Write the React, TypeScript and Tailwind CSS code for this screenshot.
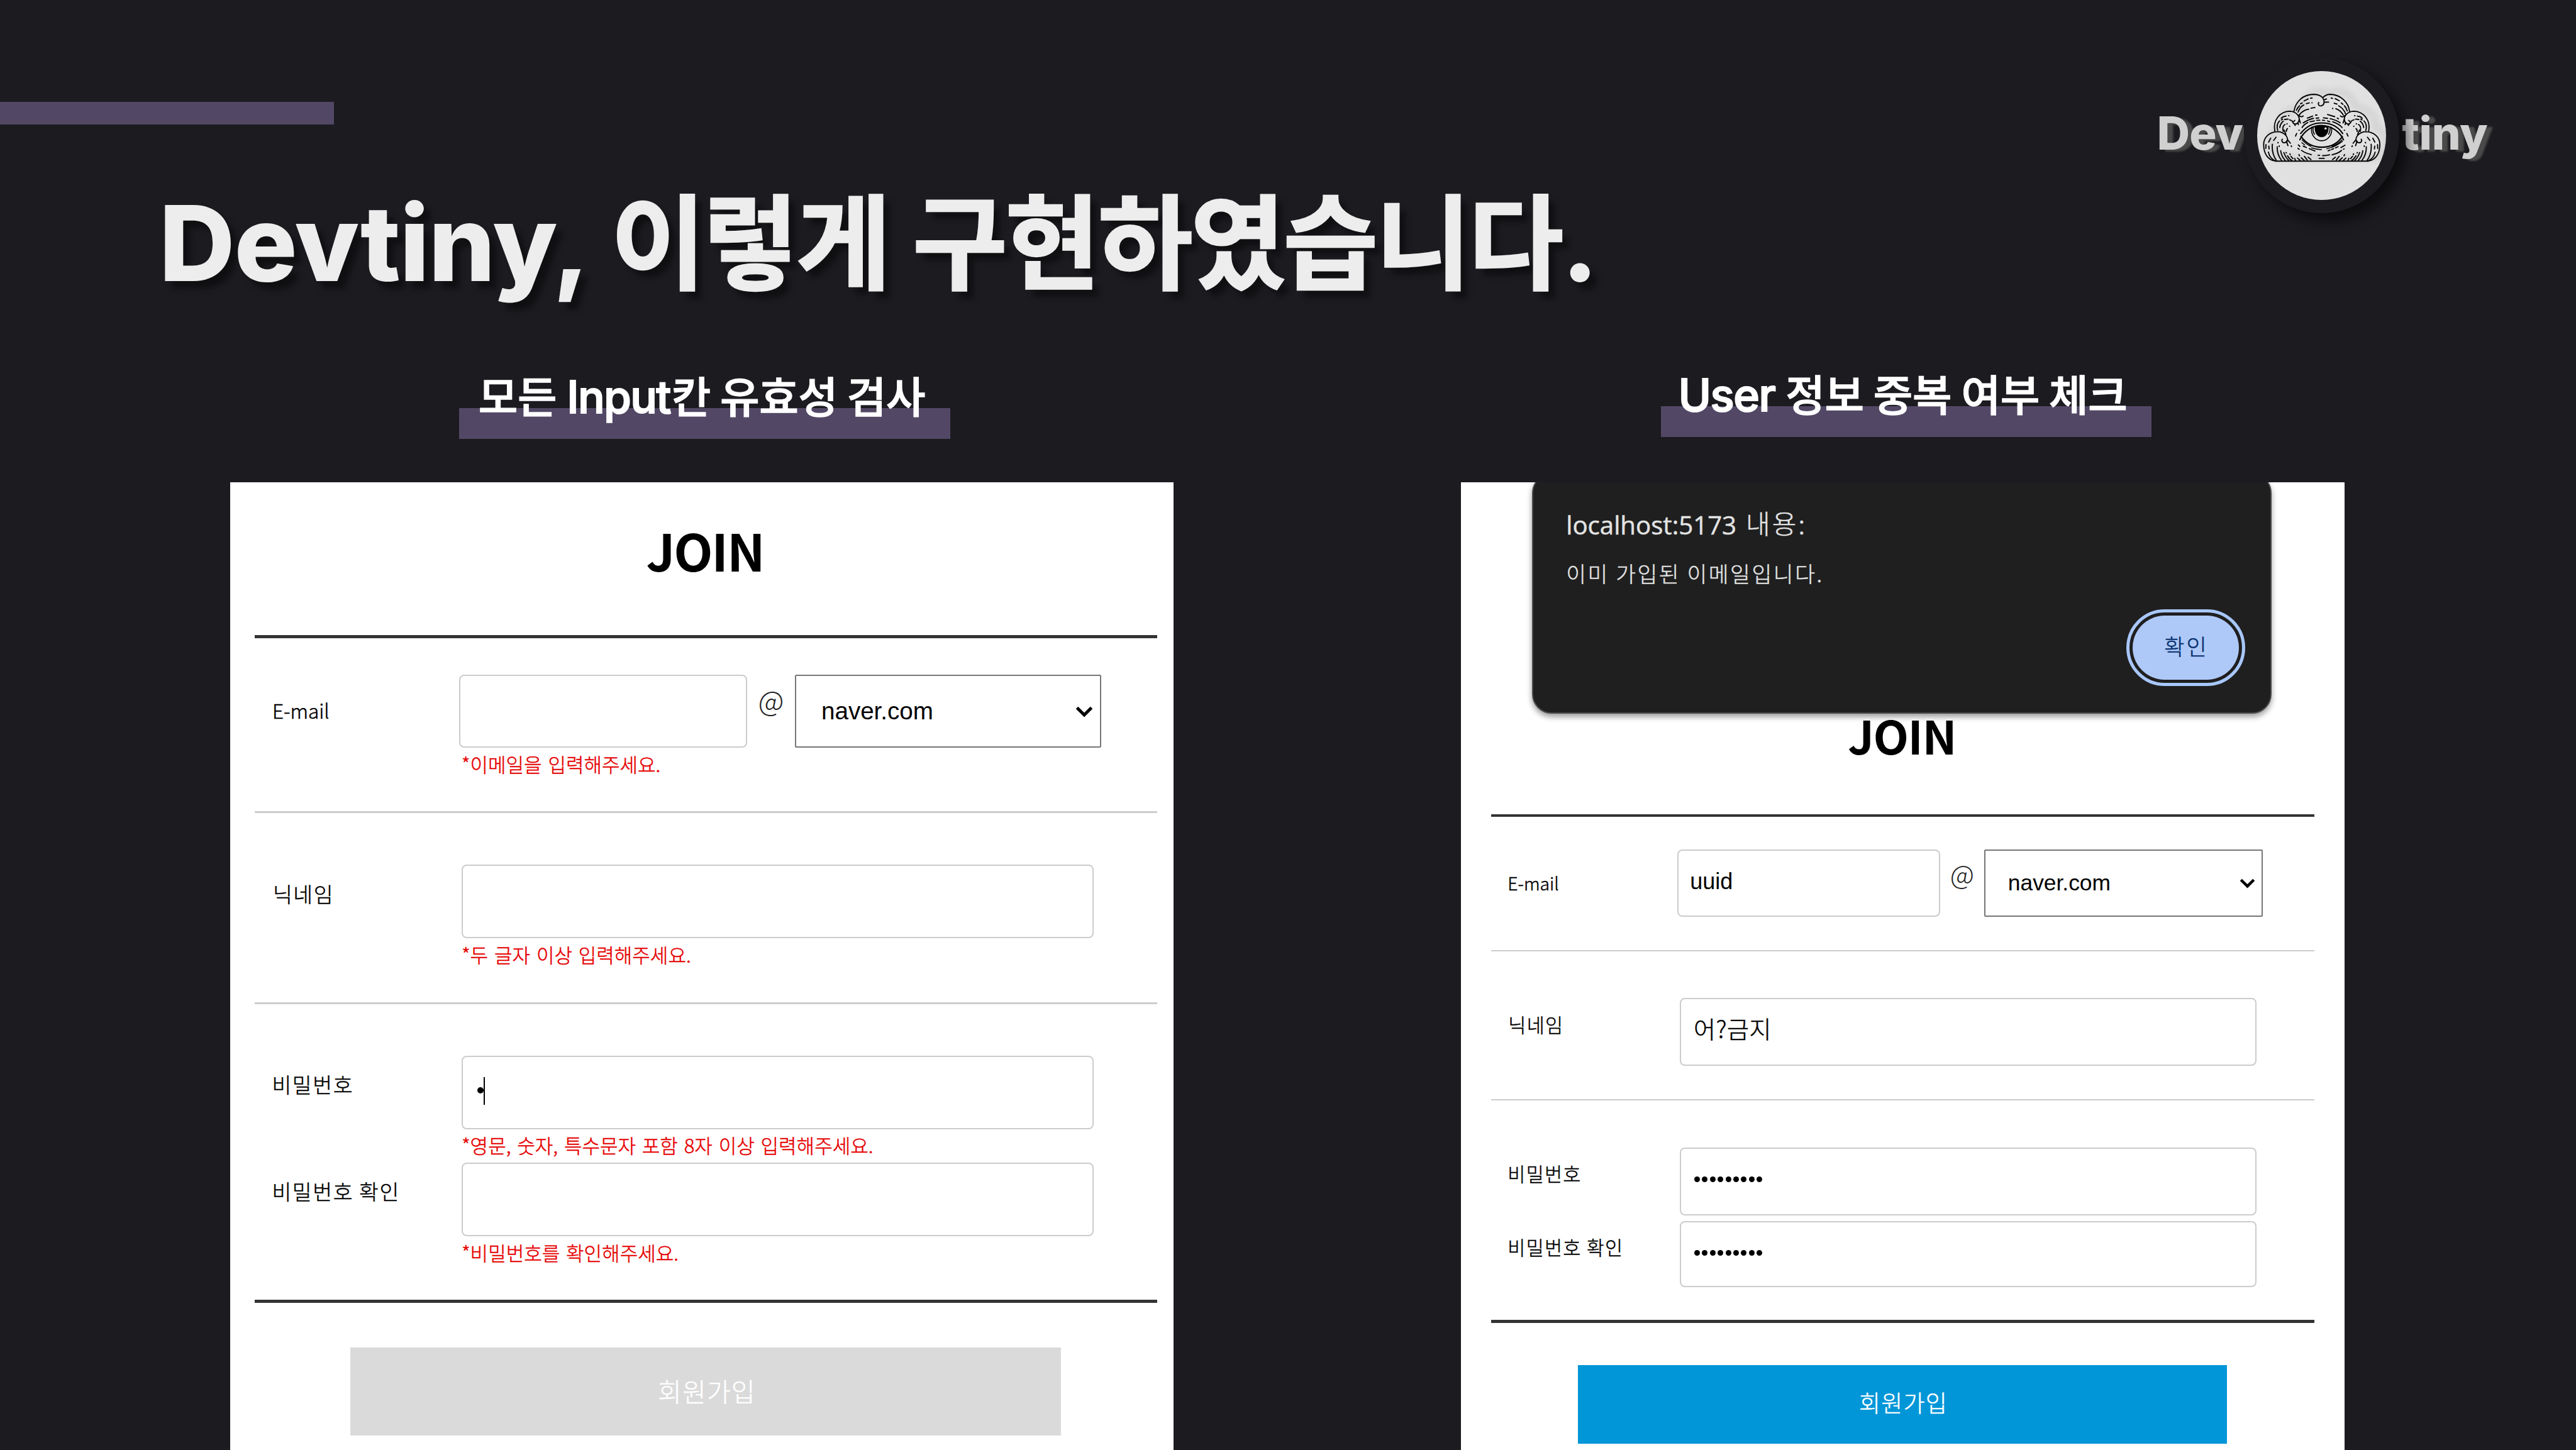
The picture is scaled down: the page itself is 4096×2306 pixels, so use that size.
import type { ReactNode } from "react";

const KR = "font-['Noto_Sans_CJK_KR',sans-serif]";
const INTER = "font-['Inter','Noto_Sans_CJK_KR',sans-serif]";
const ARIAL = "font-['Liberation_Sans',Arial,sans-serif]";
const OPEN = "font-['Open_Sans',sans-serif]";

function cx(...parts: (string | undefined)[]) {
  return parts.filter(Boolean).join(" ");
}

/* One half of the shading that is the same on both sides of the cloud. */
function CloudSide() {
  return (
    <g>
      <path d="M205 496C190 420 240 356 312 356C350 358 376 385 376 412C374 438 354 450 341 444C328 437 330 430 326 424M340 444L348 456M366 436L370 450M376 412L384 438M338 428L345 420" />
      <path d="M212 705C155 700 127 650 127 590C127 540 165 499 230 499C268 503 294 530 294 555C292 578 268 580 259 572C251 562 254 556 258 552M294 555L314 580M286 566L297 597M283 520L270 488M320 598L322 604" />
      <path d="M176 545L162 572M214 538L197 560M143 590L142 616M163 600L165 620M188 587C184 630 195 670 216 700M222 605C220 650 238 682 252 700M246 632C250 660 264 686 278 700M268 645C278 672 290 690 302 700M160 642C166 668 182 690 202 700M284 645L286 648M294 668C302 682 312 694 324 700M318 672L332 688M344 686L350 700M228 574L227 578M236 598L236 603M311 654L313 660M374 660L378 668M364 684L382 700M390 682L410 700M412 672L432 698M438 678L458 694" />
      <path d="M250 405C258 396 270 391 284 390M301 387L304 387M225 490C217 460 224 438 238 424M251 417L260 411M240 470C242 452 252 436 264 426M274 414L298 411M308 416L320 421M264 498C258 474 264 456 276 449M290 445L292 444M308 461L310 462M294 478C286 484 285 490 286 498M350 530L358 512M374 490L376 488" />
    </g>
  );
}

function CloudOutline() {
  return (
    <path d="M208 704C152 692 127 640 127 590C127 540 165 499 206 496C190 420 240 356 340 356C350 290 400 238 480 238C505 238 530 250 540 262C555 245 575 238 595 238C670 242 720 295 728 354C830 356 878 420 862 496C902 499 940 540 940 590C940 640 915 692 860 704Z" />
  );
}

function CloudEye() {
  return (
    <svg viewBox="82 75 901 902" className="size-full" fill="none" stroke="#000" strokeWidth="8.2" strokeLinecap="round" strokeLinejoin="round">
      <defs>
        <filter id="haze" x="-20%" y="-20%" width="140%" height="140%">
          <feGaussianBlur stdDeviation="20" />
        </filter>
      </defs>
      <g filter="url(#haze)" opacity="0.06" strokeWidth="46" transform="translate(44 -22)">
        <CloudOutline />
      </g>
      <CloudSide />
      <g transform="translate(1067 0) scale(-1 1)">
        <CloudSide />
      </g>
      <path d="M208 705H860" strokeWidth="9" />
      <path d="M339 357C350 290 400 238 480 238C505 239 530 250 540 262C556 285 552 312 532 318C515 322 505 310 512 295M540 262C555 245 575 238 595 238C670 242 720 295 728 356" />
      <path d="M356 350C362 335 370 325 378 318M385 304L397 298M410 284L438 270M455 265L466 264M368 362C378 335 395 318 408 312M425 303L446 298M465 297L466 297M374 384C393 360 420 345 442 342M458 335L486 330M372 384C384 398 398 396 403 389M664 389C672 398 684 398 696 386" />
      <path d="M600 264L609 266M628 268L656 283M670 298L682 308M692 318C702 328 708 340 712 354M620 300L640 306M652 318C676 332 692 350 700 374M609 336L611 337M632 338C655 345 674 365 684 382M548 278L566 270M552 293L582 292" />
      <path d="M432 404L470 390M490 383L500 383M574 379L624 394M642 404L650 409M404 438C430 420 455 410 476 406M494 405L512 403M545 402L574 406M592 408C620 415 645 425 662 437M396 470C408 452 424 440 436 435M452 430L482 424M498 420L520 419M538 419L554 421M574 424L590 430M610 430C640 440 662 455 676 470" />
      <path d="M386 512C430 455 480 438 532 438C590 438 645 460 680 512M380 556C410 490 470 456 532 456C600 456 660 500 686 556M388 532C430 590 480 608 532 608C590 608 640 590 678 532" strokeWidth="9" />
      <path d="M396 557C416 578 434 592 458 602M394 576L414 592M462 612C488 622 510 625 532 625M606 602C634 592 656 576 676 557M568 619C600 612 640 598 678 566" strokeWidth="6.5" />
      <path d="M464 468C453 520 490 563 532 563C575 563 612 520 601 468M474 468C470 490 475 506 483 518M591 468C593 490 588 506 581 518" strokeWidth="7" />
      <path d="M485 464Q532 448 581 464C584 508 562 537 532 537C504 537 481 508 485 464Z" fill="#000" strokeWidth="1" />
      <circle cx="560" cy="477" r="8" fill="#d8d8d8" stroke="none" />
      <path d="M370 592L380 602M404 600L426 610M367 616L376 623M392 630C410 644 440 655 460 660M446 618L486 634M508 664L518 665M540 667C560 667 575 663 588 661M606 661C640 652 662 642 672 630M515 686L551 686M578 633L592 628M602 624L616 618M630 612L648 604M668 610L696 594M686 622L690 619" />
    </svg>
  );
}

function Logo() {
  const word = cx(INTER, "text-[72.3px] font-extrabold leading-[100px] text-[#d0d0d0] [text-shadow:9px_3px_3px_#4a4a4a] whitespace-nowrap");
  return (
    <div className="mr-[136px] mt-[91.5px] flex w-[530.3px] items-start">
      <div className={cx(word, "mt-[70px] w-[138px] shrink-0 overflow-hidden tracking-[-0.8px]")}>Dev</div>
      <div className="relative z-10 flex size-[247px] shrink-0 items-center justify-center rounded-full bg-[#1c1b20] shadow-[12px_12px_22px_rgba(0,0,0,0.6)]">
        <div className="size-[205px] overflow-hidden rounded-full bg-[#e1e1e1]">
          <CloudEye />
        </div>
      </div>
      <div className={cx(word, "ml-[4.5px] mt-[70px] tracking-[-0.3px]")}>tiny</div>
    </div>
  );
}

function Subtitle({ className, children }: { className: string; children: ReactNode }) {
  return (
    <div className={cx("relative h-[110.3px]", className)}>
      <div className="absolute inset-x-0 bottom-0 h-[49px] bg-[#524865]" />
      <h2 className="relative flex items-baseline whitespace-nowrap leading-[80px] text-white">{children}</h2>
    </div>
  );
}

function Box({ className, children }: { className: string; children?: ReactNode }) {
  return <div className={cx("shrink-0 rounded-[8px] border-2 border-[#cccccc] bg-white", className)}>{children}</div>;
}

function Select({ className, children }: { className: string; children: ReactNode }) {
  return (
    <div className={cx("flex shrink-0 justify-between rounded-[2px] border-2 border-[#767676] bg-white text-black", ARIAL, className)}>
      {children}
    </div>
  );
}

function Chevron({ className }: { className: string }) {
  return (
    <svg viewBox="0 0 28 18" className={className} fill="none" stroke="#000" strokeWidth="5">
      <path d="M2.5 2.5L14 14L25.5 2.5" />
    </svg>
  );
}

function Dots() {
  return (
    <div className="flex gap-[3.4px]">
      {Array.from({ length: 9 }, (_, i) => (
        <span key={i} className="size-[9px] rounded-full bg-black" />
      ))}
    </div>
  );
}

const thicken = "[-webkit-text-stroke:0.5px_currentColor]";
const subKR = cx(KR, "text-[68px] font-medium tracking-[-0.3px] [-webkit-text-stroke:1.3px_#fff]");
const subLatin = cx(INTER, "text-[71px] font-medium [-webkit-text-stroke:2px_#fff]");
const labelL = cx(KR, thicken, "shrink-0 whitespace-nowrap text-[33.5px] font-light leading-[40px] tracking-[1.6px] text-black");
const labelR = cx(KR, thicken, "shrink-0 whitespace-nowrap text-[30.5px] font-light leading-[40px] tracking-[1.3px] text-black");
const error = cx(KR, thicken, "h-[40px] whitespace-nowrap text-[31px] font-light leading-[40px] [word-spacing:3px] text-[#e60000]");

function ValidationCard() {
  return (
    <div className="h-[1539.4px] w-[1500px] overflow-hidden bg-white pl-[39px] pr-[26px]">
      <div className="flex h-[243.4px] flex-col">
        <h3 className={cx(KR, "ml-[622px] mt-[57px] text-[81px] font-bold leading-[100px] tracking-[-2.2px] text-black")}>JOIN</h3>
      </div>
      <div className="h-[5px] bg-[#333333]" />

      <div className="flex h-[274.6px]">
        <div className={cx(KR, thicken, "w-[324.4px] shrink-0 pl-[27.5px] pt-[94px] text-[31.5px] font-light leading-[40px] text-black")}>E-mail</div>
        <div className="pt-[57.7px]">
          <div className="flex">
            <Box className="h-[116px] w-[458.7px]" />
            <span className={cx(KR, "w-[76px] shrink-0 pl-[17px] pt-[20.5px] text-[45px] font-light leading-[40px] text-[#222]")}>@</span>
            <Select className="h-[116px] w-[486.6px] text-[38.6px] leading-[40px]">
              <span className="pl-[39.5px] pt-[36px]">naver.com</span>
              <Chevron className="mr-[11px] mt-[48.5px] h-[18px] w-[28px]" />
            </Select>
          </div>
          <div className={cx(error, "ml-[4px] mt-[5.9px]")}>*이메일을 입력해주세요.</div>
        </div>
      </div>
      <div className="h-[3px] bg-[#cccccc]" />

      <div className="flex h-[301.7px]">
        <div className={cx(labelL, "w-[328.5px] pl-[28.5px] pt-[108px]")}>닉네임</div>
        <div className="pt-[82.6px]">
          <Box className="h-[117px] w-[1005.3px]" />
          <div className={cx(error, "mt-[6px]")}>*두 글자 이상 입력해주세요.</div>
        </div>
      </div>
      <div className="h-[2.5px] bg-[#cccccc]" />

      <div className="flex h-[252.3px]">
        <div className={cx(labelL, "w-[328.5px] pl-[27px] pt-[107px]")}>비밀번호</div>
        <div className="pt-[82px]">
          <Box className="flex h-[117px] w-[1005.3px] pl-[23px]">
            <span className="mt-[48px] size-[10px] rounded-full bg-black" />
            <span className="mt-[32.5px] h-[44px] w-[2px] bg-black" />
          </Box>
          <div className={cx(error, "mt-[5.5px]")}>*영문, 숫자, 특수문자 포함 8자 이상 입력해주세요.</div>
        </div>
      </div>
      <div className="flex h-[217.9px]">
        <div className={cx(labelL, "w-[328.5px] pl-[27px] pt-[24.5px]")}>비밀번호 확인</div>
        <div>
          <Box className="h-[117px] w-[1005.3px]" />
          <div className={cx(error, "mt-[5.5px]")}>*비밀번호를 확인해주세요.</div>
        </div>
      </div>
      <div className="h-[5px] bg-[#333333]" />

      <div className={cx(KR, thicken, "ml-[151.2px] mt-[71px] h-[140.5px] w-[1130.5px] bg-[#dadada] pl-[489.5px] pt-[48.5px] text-[41px] font-light leading-[40px] tracking-[1.2px] text-white")}>
        회원가입
      </div>
    </div>
  );
}

function AlertDialog() {
  return (
    <div className="absolute left-[113px] top-[-14px] z-10 flex h-[382.5px] w-[1176.2px] flex-col rounded-[31px] border-2 border-[#4b4b4b] bg-[#1f1f1f] pl-[52px] shadow-[0_5px_10px_rgba(0,0,0,0.4)]">
      <div className="mt-[47px] flex h-[68px] items-baseline whitespace-nowrap text-[#e3e3e3]">
        <span className={cx(OPEN, thicken, "text-[40.2px] font-medium leading-[60px]")}>localhost:5173</span>
        <span className={cx(KR, thicken, "relative -top-[1px] ml-[15px] text-[42px] font-light leading-[60px] tracking-[3px]")}>내용:</span>
      </div>
      <div className={cx(KR, thicken, "mt-[21.5px] whitespace-nowrap text-[34.5px] font-light leading-[40px] tracking-[2.6px] text-[#e3e3e3]")}>
        이미 가입된 이메일입니다.
      </div>
      <div className="ml-[891px] mt-[38px] h-[121.7px] w-[188.5px] rounded-full border-5 border-[#a8c7fa] p-[5px]">
        <div className={cx(KR, thicken, "h-full rounded-full bg-[#aec9f7] pl-[50px] pt-[28px] text-[35px] font-light leading-[40px] tracking-[3px] text-[#062e6f]")}>확인</div>
      </div>
    </div>
  );
}

function DuplicateCard() {
  return (
    <div className="relative h-[1539.4px] w-[1405.2px] overflow-hidden bg-white pl-[48px] pr-[48px]">
      <AlertDialog />
      <div className="flex h-[528.4px] flex-col">
        <h3 className={cx(KR, "ml-[567px] mt-[351.3px] text-[73.5px] font-bold leading-[100px] tracking-[-1.5px] text-black")}>JOIN</h3>
      </div>
      <div className="h-[4.5px] bg-[#333333]" />

      <div className="flex h-[211.2px]">
        <div className={cx(KR, thicken, "w-[295.9px] shrink-0 pl-[26px] pt-[85px] text-[28.3px] font-light leading-[40px] text-black")}>E-mail</div>
        <div className="flex pt-[51.6px]">
          <Box className={cx(ARIAL, "h-[107px] w-[417.6px] pl-[18px] pt-[29px] text-[36px] leading-[40px] text-black")}>uuid</Box>
          <span className={cx(KR, "w-[70px] shrink-0 pl-[16px] pt-[18px] text-[42px] font-light leading-[40px] text-[#222]")}>@</span>
          <Select className="h-[107px] w-[443.4px] text-[35.4px] leading-[40px]">
            <span className="pl-[36px] pt-[31px]">naver.com</span>
            <Chevron className="mr-[10.5px] mt-[44px] h-[16px] w-[25px]" />
          </Select>
        </div>
      </div>
      <div className="h-[2.5px] bg-[#cccccc]" />

      <div className="flex h-[234.4px]">
        <div className={cx(labelR, "w-[299.7px] pl-[27px] pt-[96px]")}>닉네임</div>
        <div className="pt-[74.1px]">
          <Box className={cx(KR, thicken, "h-[108px] w-[916.7px] pl-[20px] pt-[26px] text-[38px] font-light leading-[40px] tracking-[0.5px] text-black")}>어?금지</Box>
        </div>
      </div>
      <div className="h-[2.5px] bg-[#cccccc]" />

      <div className="flex h-[192px]">
        <div className={cx(labelR, "w-[299.7px] pl-[26px] pt-[96px]")}>비밀번호</div>
        <div className="pt-[74.5px]">
          <Box className="h-[108px] w-[916.7px] pl-[21px] pt-[44px]">
            <Dots />
          </Box>
        </div>
      </div>
      <div className="flex h-[156.9px]">
        <div className={cx(labelR, "w-[299.7px] pl-[26px] pt-[21px]")}>비밀번호 확인</div>
        <Box className="h-[105px] w-[916.7px] pl-[21px] pt-[44px]">
          <Dots />
        </Box>
      </div>
      <div className="h-[5px] bg-[#333333]" />

      <div className={cx(KR, thicken, "ml-[137.8px] mt-[67px] h-[125.4px] w-[1031.6px] bg-[#0096d8] pl-[447px] pt-[39.5px] text-[37px] font-light leading-[40px] tracking-[1.2px] text-white")}>
        회원가입
      </div>
    </div>
  );
}

export default function App() {
  return (
    <main className="flex h-[2306px] w-[4096px] flex-col overflow-hidden bg-[#1c1b20]">
      <header className="flex h-[275px] shrink-0 justify-between">
        <div className="mt-[161.5px] h-[36px] w-[531px] bg-[#524865]" />
        <Logo />
      </header>

      <h1 className="flex h-[245px] shrink-0 items-baseline whitespace-nowrap pl-[253px] pt-px font-bold leading-[200px] text-[#ededed] [text-shadow:11px_12px_10px_rgba(0,0,0,0.45)]">
        <span className={cx(INTER, "text-[167px] font-extrabold tracking-[-1.3px]")}>Devtiny,</span>
        <span className={cx(KR, "ml-[34.5px] text-[164px] tracking-[-3.6px] [-webkit-text-stroke:2.5px_#ededed]")}>이렇게</span>
        <span className={cx(KR, "ml-[38px] text-[164px] tracking-[-3.5px] [-webkit-text-stroke:2.5px_#ededed]")}>구현하였습니다</span>
        <span className={cx(INTER, "text-[167px] font-extrabold")}>.</span>
      </h1>

      <div className="flex pl-[366.4px]">
        <section className="w-[1500px]">
          <div className="h-[246.6px] pt-[67.7px]">
            <Subtitle className="ml-[364px] w-[781px] pl-[30.4px]">
              <span className={subKR}>모든</span>
              <span className={cx(subLatin, "ml-[16px] tracking-[-1.7px]")}>Input</span>
              <span className={cx(subKR, "ml-[2px]")}>칸 유효성 검사</span>
            </Subtitle>
          </div>
          <ValidationCard />
        </section>
        <section className="ml-[456.9px] w-[1405.2px]">
          <div className="h-[246.6px] pt-[65.1px]">
            <Subtitle className="ml-[317.3px] w-[780.3px] pl-[27.8px]">
              <span className={cx(subLatin, "tracking-[-1.5px]")}>User</span>
              <span className={cx(subKR, "ml-[17px]")}>정보 중복 여부 체크</span>
            </Subtitle>
          </div>
          <DuplicateCard />
        </section>
      </div>
    </main>
  );
}
